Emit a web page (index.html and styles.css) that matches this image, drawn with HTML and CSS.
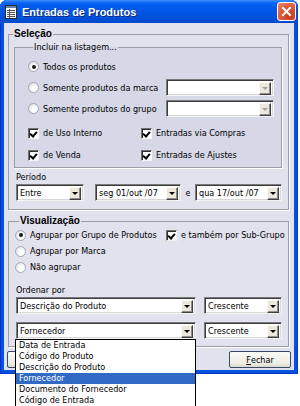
FILE: index.html
```html
<!DOCTYPE html>
<html lang="pt-BR">
<head>
    <meta charset="UTF-8">
    <meta name="viewport" content="width=device-width, initial-scale=1.0">
    <title>Entradas de Produtos</title>
    <link rel="stylesheet" href="styles.css">
</head>
<body>
    <div class="window">
        <div class="titlebar">
            <svg class="app-icon" width="12" height="14" viewBox="0 0 12 14">
                <rect x="0.5" y="0.5" width="11" height="13" fill="#fff" stroke="#2a2a2a"/>
                <rect x="1" y="1" width="10" height="2" fill="#6b7fa8"/>
                <path d="M2 5.5h8M2 7.5h8M2 9.5h8M2 11.5h8M4.5 4v9" stroke="#555" stroke-width="1"/>
            </svg>
            <span class="title">Entradas de Produtos</span>
            <span class="close-btn">
                <svg width="11" height="11" viewBox="0 0 11 11">
                    <path d="M2 2L9 9M9 2L2 9" stroke="#fff" stroke-width="2" stroke-linecap="square"/>
                </svg>
            </span>
        </div>

        <div class="client">
            <fieldset class="group selecao">
                <legend>Seleção</legend>
                <fieldset class="inner">
                    <legend>Incluir na listagem...</legend>
                    <div class="opt-row">
                        <span class="opt"><span class="radio checked"></span>Todos os produtos</span>
                    </div>
                    <div class="opt-row">
                        <span class="opt wide"><span class="radio"></span>Somente produtos da marca</span>
                        <div class="combo filter disabled"><span class="field"></span><span class="arrow"></span></div>
                    </div>
                    <div class="opt-row">
                        <span class="opt wide"><span class="radio"></span>Somente produtos do grupo</span>
                        <div class="combo filter disabled"><span class="field"></span><span class="arrow"></span></div>
                    </div>
                    <div class="check-row first">
                        <span class="opt col1"><span class="check"></span>de Uso Interno</span>
                        <span class="opt"><span class="check"></span>Entradas via Compras</span>
                    </div>
                    <div class="check-row">
                        <span class="opt col1"><span class="check"></span>de Venda</span>
                        <span class="opt"><span class="check"></span>Entradas de Ajustes</span>
                    </div>
                </fieldset>

                <div class="periodo">
                    <div class="caption">Período</div>
                    <div class="combo-row">
                        <div class="combo entre"><span class="field">Entre</span><span class="arrow"></span></div>
                        <div class="combo date1"><span class="field">seg 01/out /07</span><span class="arrow"></span></div>
                        <span class="e-label">e</span>
                        <div class="combo date2"><span class="field">qua 17/out /07</span><span class="arrow"></span></div>
                    </div>
                </div>
            </fieldset>

            <fieldset class="group visual">
                <legend>Visualização</legend>
                <div class="vis-row">
                    <span class="opt vcol"><span class="radio checked"></span>Agrupar por Grupo de Produtos</span>
                    <span class="opt"><span class="check"></span>e também por Sub-Grupo</span>
                </div>
                <div class="vis-row">
                    <span class="opt"><span class="radio"></span>Agrupar por Marca</span>
                </div>
                <div class="vis-row">
                    <span class="opt"><span class="radio"></span>Não agrupar</span>
                </div>
                <div class="caption order">Ordenar por</div>
                <div class="combo-row sort">
                    <div class="combo order-by"><span class="field">Descrição do Produto</span><span class="arrow"></span></div>
                    <div class="combo direction"><span class="field">Crescente</span><span class="arrow"></span></div>
                </div>
                <div class="combo-row sort second">
                    <div class="combo order-by"><span class="field">Fornecedor</span><span class="arrow"></span></div>
                    <div class="combo direction"><span class="field">Crescente</span><span class="arrow"></span></div>
                </div>
            </fieldset>

            <div class="buttons">
                <span class="btn"></span>
                <span class="btn"><u>F</u>echar</span>
            </div>
        </div>
    </div>

    <ul class="droplist">
        <li>Data de Entrada</li>
        <li>Código do Produto</li>
        <li>Descrição do Produto</li>
        <li class="selected">Fornecedor</li>
        <li>Documento do Fornecedor</li>
        <li>Código de Entrada</li>
    </ul>
</body>
</html>
```

FILE: styles.css
```css
body {
    margin: 0;
    background: #fff;
    font-family: "DejaVu Sans Condensed", "Liberation Sans", Arial, sans-serif;
    font-size: 9px;
    color: #000;
}

.window {
    width: 298px;
    height: 374px;
    box-sizing: border-box;
    display: flex;
    flex-direction: column;
    background: #0552e0;
    border-radius: 7px 7px 0 0;
    box-shadow: inset 0 0 0 1px #0833c4;
}

.titlebar {
    height: 23px;
    display: flex;
    align-items: center;
    padding: 0 2px 0 5px;
    border-radius: 7px 7px 0 0;
    background: linear-gradient(#3d8ff9 0, #0a63f2 3px, #0058e9 8px, #0052de 16px, #0049cc 23px);
}

.title {
    flex: 1;
    margin-left: 5px;
    color: #fff;
    font-family: "Liberation Sans", Arial, sans-serif;
    font-weight: bold;
    font-size: 11px;
    text-shadow: 1px 1px 0 #0b2a7a;
}

.close-btn {
    width: 19px;
    height: 19px;
    box-sizing: border-box;
    display: flex;
    align-items: center;
    justify-content: center;
    border: 1px solid #fff;
    border-radius: 3px;
    background: radial-gradient(circle at 70% 75%, #c53a1c, #e0603e 60%, #ea8a6c);
}

.client {
    flex: 1;
    margin: 0 4px 4px;
    padding-top: 5px;
    background: #e2e2ee;
    display: flex;
    flex-direction: column;
}

/* group boxes */

.group,
.inner {
    margin: 0;
    padding: 0;
    border: 1px solid #9d9da6;
    box-shadow: 1px 1px 0 #fff;
}

.group {
    margin: 0 5px 0 4px;
}

.group legend {
    margin-left: 4px;
    padding: 0 1px;
    height: 12px;
    line-height: 12px;
    font-family: "Liberation Sans", Arial, sans-serif;
    font-weight: bold;
    font-size: 10px;
}

.inner {
    margin: 1px 6px 0 5px;
    padding: 3px 0 1px 13px;
    background: #d6d7e7;
}

.inner legend {
    margin-left: 5px;
    padding: 0 1px;
    height: 12px;
    line-height: 12px;
    font-family: "DejaVu Sans Condensed", "Liberation Sans", Arial, sans-serif;
    font-weight: normal;
    font-size: 9px;
}

.opt-row {
    height: 21px;
    display: flex;
    align-items: center;
}

.check-row {
    height: 22px;
    display: flex;
    align-items: center;
}

.check-row.first {
    margin-top: 3px;
}

.opt {
    display: flex;
    align-items: center;
    white-space: nowrap;
}

.opt.wide {
    width: 138px;
    flex-shrink: 0;
}

.opt.col1 {
    width: 113px;
    flex-shrink: 0;
}

/* radios and checkboxes */

.radio {
    flex-shrink: 0;
    width: 11px;
    height: 11px;
    box-sizing: border-box;
    margin-right: 4px;
    border: 1px solid #a5a6b0;
    border-radius: 50%;
    background: radial-gradient(circle at 65% 65%, #fff 30%, #e2e2e6 75%, #cfcfd6);
    display: flex;
    align-items: center;
    justify-content: center;
}

.radio.checked::after {
    content: "";
    width: 4px;
    height: 4px;
    border-radius: 50%;
    background: #1b1b1b;
}

.check {
    flex-shrink: 0;
    width: 11px;
    height: 11px;
    box-sizing: border-box;
    margin-right: 4px;
    background: #fff;
    border: 1px solid;
    border-color: #6f6f6f #f4f4f4 #f4f4f4 #6f6f6f;
    box-shadow: inset 1px 1px 0 #2e2e2e;
    position: relative;
}

.check::after {
    content: "";
    position: absolute;
    left: 2px;
    top: 1px;
    width: 3px;
    height: 5px;
    border: solid #000;
    border-width: 0 2px 2px 0;
    transform: rotate(40deg);
}

/* combos */

.combo {
    flex-shrink: 0;
    height: 17px;
    box-sizing: border-box;
    display: flex;
    padding: 2px;
    background: #fff;
    border: 1px solid;
    border-color: #7a7a7a #f4f4f4 #f4f4f4 #7a7a7a;
    box-shadow: inset 1px 1px 0 #3c3c3c, inset -1px -1px 0 #d8d8d8;
}

.field {
    flex: 1;
    padding-left: 1px;
    line-height: 13px;
    white-space: nowrap;
    overflow: hidden;
}

.arrow {
    flex-shrink: 0;
    width: 12px;
    height: 13px;
    box-sizing: border-box;
    display: flex;
    align-items: center;
    justify-content: center;
    background: #ece9dc;
    border: 1px solid;
    border-color: #fbfaf5 #404040 #404040 #fbfaf5;
    box-shadow: inset -1px -1px 0 #8d8d8d;
}

.arrow::after {
    content: "";
    border-left: 3px solid transparent;
    border-right: 3px solid transparent;
    border-top: 3px solid #000;
}

.disabled .arrow::after {
    border-top-color: #a3a3a3;
}

.filter {
    width: 108px;
}

/* periodo */

.periodo {
    padding: 3px 0 8px 7px;
}

.caption {
    height: 12px;
    line-height: 12px;
}

.combo-row {
    margin-top: 1px;
    display: flex;
    align-items: center;
}

.entre {
    width: 68px;
    margin-right: 11px;
}

.date1 {
    width: 86px;
}

.e-label {
    width: 14px;
    text-align: center;
}

.date2 {
    width: 87px;
}

/* visualizacao */

.visual {
    margin-top: 5px;
    padding: 0 0 7px 6px;
}

.vis-row {
    height: 16px;
    display: flex;
    align-items: center;
}

.opt.vcol {
    width: 151px;
    flex-shrink: 0;
}

.caption.order {
    margin: 9px 0 0 1px;
}

.sort {
    margin-left: 1px;
    gap: 8px;
}

.sort.second {
    margin-top: 8px;
}

.order-by {
    width: 180px;
}

.direction {
    width: 78px;
}

/* buttons */

.buttons {
    margin-top: 4px;
    padding: 0 3px;
    display: flex;
    justify-content: space-between;
}

.btn {
    width: 62px;
    height: 17px;
    box-sizing: border-box;
    display: flex;
    align-items: center;
    justify-content: center;
    border: 1px solid #3b4a6b;
    border-radius: 2px;
    background: linear-gradient(#fbfbf8, #ecebe3 80%, #d8d5c8);
}

/* open dropdown */

.droplist {
    position: absolute;
    left: 15px;
    top: 339px;
    width: 181px;
    box-sizing: border-box;
    margin: 0;
    padding: 0;
    list-style: none;
    background: #fff;
    border: 1px solid #000;
}

.droplist li {
    height: 11px;
    line-height: 11px;
    padding-left: 3px;
    white-space: nowrap;
}

.droplist li.selected {
    background: #316ac5;
    color: #fff;
}
```
